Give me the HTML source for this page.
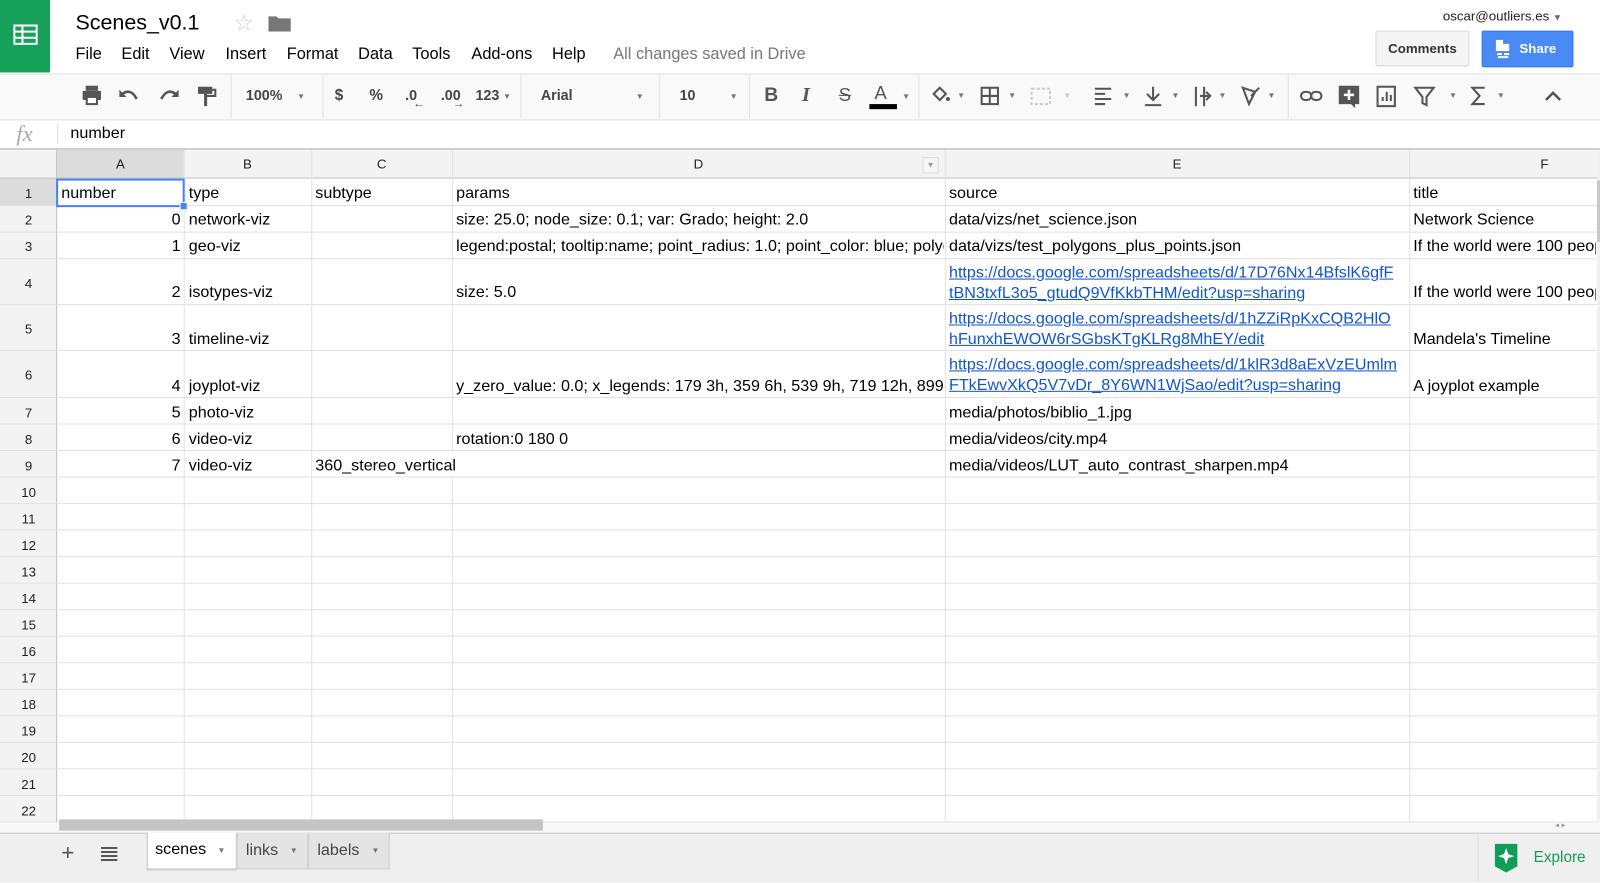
<!DOCTYPE html>
<html><head><meta charset="utf-8"><style>
html,body{margin:0;padding:0;width:1600px;height:882px;overflow:hidden;background:#fff}
#w{position:absolute;left:0;top:0;width:1568px;height:864px;transform:scale(1.020408);transform-origin:0 0;font-family:"Liberation Sans",Arial,sans-serif;color:#000}
.a{position:absolute}
.menu span{position:absolute;top:45px;font-size:16px}
.tb{position:absolute;top:85px;font-size:14px;color:#444;font-weight:bold}
.sep{position:absolute;top:74px;width:1px;height:42px;background:#e2e2e2}
.vl{position:absolute;top:147px;width:1px;height:659px;background:#e2e2e2}
.hl{position:absolute;left:0;width:1565px;height:1px;background:#e2e2e2}
.ch{position:absolute;top:153px;font-size:13px;color:#222;text-align:center}
.rh{position:absolute;left:0;width:56px;text-align:center;font-size:13px;color:#222}
.c{position:absolute;font-size:15.8px;white-space:nowrap;overflow:hidden;line-height:20px}
.r{text-align:right}
a{color:#1155cc;text-decoration:underline}
.dd{position:absolute;font-size:8px;color:#777}
</style></head><body><div id="w">
<div class="a" style="left:0;top:0;width:49px;height:71px;background:#16a05a"></div>
<svg class="a" style="left:13px;top:24px" width="24" height="20" viewBox="0 0 24 20"><rect x="1" y="1" width="22" height="18" fill="none" stroke="#fff" stroke-width="2"/><path d="M1 7h22M1 13h22M9 1v18" stroke="#fff" stroke-width="2"/></svg>
<div class="a" style="left:74px;top:11px;font-size:21px">Scenes_v0.1</div>
<div class="a" style="left:229px;top:10px;font-size:22px;color:#ccc">☆</div>
<svg class="a" style="left:263px;top:14px" width="22" height="17"><path d="M0 2h8l2 2h12v13H0z" fill="#777"/></svg>
<div class="menu"><span style="left:74px">File</span><span style="left:119px">Edit</span><span style="left:166px">View</span><span style="left:221px">Insert</span><span style="left:281px">Format</span><span style="left:351px">Data</span><span style="left:404px">Tools</span><span style="left:462px">Add-ons</span><span style="left:541px">Help</span><span style="left:601px;color:#777">All changes saved in Drive</span></div>
<div class="a" style="left:1414px;top:8px;font-size:13px;color:#222">oscar@outliers.es <span style="font-size:9px;color:#666">▼</span></div>
<div class="a" style="left:1348px;top:30px;width:90px;height:33px;background:#f5f5f5;border:1px solid #d9d9d9;border-radius:2px;font-size:13px;font-weight:bold;line-height:33px;text-align:center;color:#333">Comments</div>
<div class="a" style="left:1452px;top:30px;width:88px;height:34px;background:#4a8af4;border:1px solid #3079ed;border-radius:2px;font-size:13px;font-weight:bold;line-height:34px;color:#fff"><span style="position:absolute;left:12px;top:7px;width:14px;height:18px;border:0"><svg width="16" height="20"><rect x="1" y="0" width="7" height="11" fill="#fff"/><rect x="8" y="4" width="6" height="7" fill="#fff"/><path d="M2 14h5M9 14h5M3 17h10" stroke="#fff" stroke-width="2"/></svg></span><span style="position:absolute;left:36px">Share</span></div>
<div class="a" style="left:0;top:72px;width:1568px;height:1px;background:#e0e0e0"></div>
<div class="a" style="left:0;top:73px;width:1568px;height:44px;background:#f9f9f9"></div>
<div class="a" style="left:0;top:117px;width:1568px;height:1px;background:#e0e0e0"></div>
<svg class="a" style="left:78px;top:82px" width="150" height="24" fill="#555"><rect x="3" y="7" width="18" height="9" rx="1"/><rect x="6" y="2" width="12" height="5"/><rect x="7" y="13" width="10" height="7" fill="#fff" stroke="#555" stroke-width="2"/><path d="M42 10q8-6 14 5" stroke="#555" stroke-width="2.5" fill="none"/><path d="M39 6v7h7z"/><path d="M94 10q-8-6-14 5" stroke="#555" stroke-width="2.5" fill="none"/><path d="M97 6v7h-7z"/><rect x="116" y="3" width="14" height="7"/><rect x="122" y="10" width="3" height="12"/><path d="M130 6h3v6h-9" stroke="#555" stroke-width="2" fill="none"/></svg>
<div class="sep" style="left:226px"></div>
<div class="tb" style="left:241px">100%</div><div class="dd" style="left:291px;top:90px">▼</div>
<div class="sep" style="left:316px"></div>
<div class="tb" style="left:328px;font-size:15px">$</div><div class="tb" style="left:362px;font-size:15px">%</div>
<div class="tb" style="left:397px">.0</div><div class="a" style="left:405px;top:96px;font-size:11px;color:#444">←</div>
<div class="tb" style="left:432px">.00</div><div class="a" style="left:444px;top:96px;font-size:11px;color:#444">→</div>
<div class="tb" style="left:466px">123</div><div class="dd" style="left:493px;top:90px">▼</div>
<div class="sep" style="left:510px"></div>
<div class="tb" style="left:530px">Arial</div><div class="dd" style="left:623px;top:90px">▼</div>
<div class="sep" style="left:646px"></div>
<div class="tb" style="left:666px">10</div><div class="dd" style="left:715px;top:90px">▼</div>
<div class="sep" style="left:734px"></div>
<div class="tb" style="left:749px;font-size:19px;top:83px;color:#555">B</div>
<div class="tb" style="left:786px;font-size:20px;top:82px;color:#555;font-family:'Liberation Serif',serif;font-style:italic">I</div>
<div class="tb" style="left:822px;font-size:18px;top:83px;color:#555;text-decoration:line-through;font-weight:normal">S</div>
<div class="tb" style="left:857px;font-size:18px;top:81px;color:#555;font-weight:normal">A</div><div class="a" style="left:852px;top:102px;width:27px;height:5px;background:#000"></div><div class="dd" style="left:884px;top:90px">▼</div>
<div class="sep" style="left:900px"></div>
<svg class="a" style="left:910px;top:82px" width="360" height="24" fill="#555" stroke="#555"><path d="M5 10l6-6 6 6-6 6z" stroke-width="2" fill="none"/><circle cx="19" cy="15" r="2" stroke="none"/><text x="28" y="14" font-size="8" stroke="none" fill="#777">▼</text><rect x="52" y="4" width="16" height="16" fill="none" stroke-width="2"/><path d="M60 4v16M52 12h16" stroke-width="2"/><text x="78" y="14" font-size="8" stroke="none" fill="#777">▼</text><rect x="101" y="5" width="18" height="15" fill="none" stroke="#ccc" stroke-width="2" stroke-dasharray="3 2"/><text x="132" y="14" font-size="8" stroke="none" fill="#ccc">▼</text><path d="M163 5h16M163 10h10M163 15h16M163 20h10" stroke-width="2"/><text x="190" y="14" font-size="8" stroke="none" fill="#777">▼</text><path d="M220 3v12M214 10l6 6 6-6M212 21h16" stroke-width="2" fill="none"/><text x="238" y="14" font-size="8" stroke="none" fill="#777">▼</text><path d="M262 3v19M270 3v19M266 12h10M272 8l4 4-4 4" stroke-width="2" fill="none"/><text x="284" y="14" font-size="8" stroke="none" fill="#777">▼</text><path d="M308 4l12 4-6 12zM316 12l8-8" stroke-width="2" fill="none"/><text x="332" y="14" font-size="8" stroke="none" fill="#777">▼</text></svg>
<div class="sep" style="left:1262px"></div>
<svg class="a" style="left:1272px;top:82px" width="270" height="26" fill="#555" stroke="#555"><rect x="3" y="8" width="10" height="8" rx="4" fill="none" stroke-width="2"/><rect x="13" y="8" width="10" height="8" rx="4" fill="none" stroke-width="2"/><path d="M40 2h20v18h-4v4l-4-4H40z" stroke="none"/><path d="M50 6v10M45 11h10" stroke="#fff" stroke-width="2.5"/><rect x="78" y="3" width="17" height="19" fill="none" stroke-width="2"/><path d="M83 17v-4M87 17V8M91 17v-6" stroke-width="2"/><path d="M115 4h18l-7 9v8l-4-2v-6z" stroke-width="2" fill="none"/><text x="148" y="14" font-size="8" stroke="none" fill="#777">▼</text><path d="M183 4h-12l7 8-7 8h12" stroke-width="2" fill="none"/><text x="195" y="14" font-size="8" stroke="none" fill="#777">▼</text><path d="M243 16l7-7 7 7" stroke-width="2.5" fill="none"/></svg>
<div class="a" style="left:16px;top:118px;font-size:22px;color:#aaa;font-family:'Liberation Serif',serif;font-style:italic">fx</div>
<div class="a" style="left:56px;top:121px;width:1px;height:20px;background:#ddd"></div>
<div class="a" style="left:69px;top:122px;font-size:15.8px">number</div>
<div class="a" style="left:0;top:145px;width:1568px;height:2px;background:#d0d0d0"></div>
<div class="a" style="left:0;top:147px;width:1565px;height:28px;background:#f3f3f3"></div>
<div class="a" style="left:56px;top:147px;width:124px;height:28px;background:#dcdcdc"></div>
<div class="a" style="left:0;top:175px;width:56px;height:631px;background:#f3f3f3"></div>
<div class="a" style="left:0;top:175px;width:56px;height:27px;background:#dcdcdc"></div>
<div class="a" style="left:0;top:174px;width:1565px;height:1px;background:#c0c0c0"></div>
<div class="a" style="left:55px;top:147px;width:1px;height:659px;background:#c0c0c0"></div>
<div class="vl" style="left:180px"></div><div class="vl" style="left:305px"></div><div class="vl" style="left:443px"></div><div class="vl" style="left:926px"></div><div class="vl" style="left:1381px"></div>
<div class="a" style="left:1565px;top:147px;width:3px;height:659px;background:#f0f0f0"></div>
<div class="a" style="left:1565px;top:177px;width:3px;height:60px;background:#c8c8c8"></div>
<div class="ch" style="left:56px;width:124px">A</div><div class="ch" style="left:180px;width:125px">B</div><div class="ch" style="left:305px;width:138px">C</div><div class="ch" style="left:443px;width:483px">D</div><div class="ch" style="left:926px;width:455px">E</div><div class="ch" style="left:1381px;width:265px">F</div>
<div class="a" style="left:904px;top:154px;width:14px;height:14px;border:1px solid #ddd;background:#f6f6f6;font-size:8px;color:#999;text-align:center;line-height:14px">▼</div>
<div class="hl" style="top:201px"></div><div class="hl" style="top:227px"></div><div class="hl" style="top:253px"></div><div class="hl" style="top:298px"></div><div class="hl" style="top:343px"></div><div class="hl" style="top:389px"></div><div class="hl" style="top:415px"></div><div class="hl" style="top:441px"></div><div class="hl" style="top:467px"></div><div class="hl" style="top:493px"></div><div class="hl" style="top:519px"></div><div class="hl" style="top:545px"></div><div class="hl" style="top:571px"></div><div class="hl" style="top:597px"></div><div class="hl" style="top:623px"></div><div class="hl" style="top:649px"></div><div class="hl" style="top:675px"></div><div class="hl" style="top:701px"></div><div class="hl" style="top:727px"></div><div class="hl" style="top:753px"></div><div class="hl" style="top:779px"></div><div class="hl" style="top:805px"></div>
<div class="rh" style="top:182px">1</div><div class="rh" style="top:208px">2</div><div class="rh" style="top:234px">3</div><div class="rh" style="top:270px">4</div><div class="rh" style="top:315px">5</div><div class="rh" style="top:360px">6</div><div class="rh" style="top:397px">7</div><div class="rh" style="top:423px">8</div><div class="rh" style="top:449px">9</div><div class="rh" style="top:475px">10</div><div class="rh" style="top:501px">11</div><div class="rh" style="top:527px">12</div><div class="rh" style="top:553px">13</div><div class="rh" style="top:579px">14</div><div class="rh" style="top:605px">15</div><div class="rh" style="top:631px">16</div><div class="rh" style="top:657px">17</div><div class="rh" style="top:683px">18</div><div class="rh" style="top:709px">19</div><div class="rh" style="top:735px">20</div><div class="rh" style="top:761px">21</div><div class="rh" style="top:787px">22</div>
<div class="a" style="left:55px;top:175px;width:122px;height:24px;border:2px solid #4285f4"></div>
<div class="a" style="left:176px;top:198px;width:6px;height:6px;background:#4285f4;border:1px solid #fff"></div>
<div class="c" style="left:60px;top:180px">number</div><div class="c" style="left:185px;top:180px">type</div><div class="c" style="left:309px;top:180px">subtype</div><div class="c" style="left:447px;top:180px">params</div><div class="c" style="left:930px;top:180px">source</div><div class="c" style="left:1385px;top:180px">title</div>
<div class="c r" style="left:60px;width:117px;top:206px">0</div><div class="c" style="left:185px;top:206px">network-viz</div><div class="c" style="left:447px;top:206px">size: 25.0; node_size: 0.1; var: Grado; height: 2.0</div><div class="c" style="left:930px;top:206px">data/vizs/net_science.json</div><div class="c" style="left:1385px;top:206px">Network Science</div>
<div class="c r" style="left:60px;width:117px;top:232px">1</div><div class="c" style="left:185px;top:232px">geo-viz</div><div class="c" style="left:447px;top:232px;width:478px">legend:postal; tooltip:name; point_radius: 1.0; point_color: blue; polygon</div><div class="c" style="left:930px;top:232px">data/vizs/test_polygons_plus_points.json</div><div class="c" style="left:1385px;top:232px;width:179px">If the world were 100 people</div>
<div class="c r" style="left:60px;width:117px;top:277px">2</div><div class="c" style="left:185px;top:277px">isotypes-viz</div><div class="c" style="left:447px;top:277px">size: 5.0</div><div class="c" style="left:930px;top:258px;width:450px"><a>https://docs.google.com/spreadsheets/d/17D76Nx14BfslK6gfF<br>tBN3txfL3o5_gtudQ9VfKkbTHM/edit?usp=sharing</a></div><div class="c" style="left:1385px;top:277px;width:179px">If the world were 100 people</div>
<div class="c r" style="left:60px;width:117px;top:323px">3</div><div class="c" style="left:185px;top:323px">timeline-viz</div><div class="c" style="left:930px;top:303px;width:450px"><a>https://docs.google.com/spreadsheets/d/1hZZiRpKxCQB2HlO<br>hFunxhEWOW6rSGbsKTgKLRg8MhEY/edit</a></div><div class="c" style="left:1385px;top:323px">Mandela's Timeline</div>
<div class="c r" style="left:60px;width:117px;top:369px">4</div><div class="c" style="left:185px;top:369px">joyplot-viz</div><div class="c" style="left:447px;top:369px;width:478px">y_zero_value: 0.0; x_legends: 179 3h, 359 6h, 539 9h, 719 12h, 899 15h</div><div class="c" style="left:930px;top:348px;width:450px"><a>https://docs.google.com/spreadsheets/d/1klR3d8aExVzEUmlm<br>FTkEwvXkQ5V7vDr_8Y6WN1WjSao/edit?usp=sharing</a></div><div class="c" style="left:1385px;top:369px">A joyplot example</div>
<div class="c r" style="left:60px;width:117px;top:395px">5</div><div class="c" style="left:185px;top:395px">photo-viz</div><div class="c" style="left:930px;top:395px">media/photos/biblio_1.jpg</div>
<div class="c r" style="left:60px;width:117px;top:421px">6</div><div class="c" style="left:185px;top:421px">video-viz</div><div class="c" style="left:447px;top:421px">rotation:0 180 0</div><div class="c" style="left:930px;top:421px">media/videos/city.mp4</div>
<div class="c r" style="left:60px;width:117px;top:447px">7</div><div class="c" style="left:185px;top:447px">video-viz</div><div class="a" style="left:306px;top:442px;width:619px;height:25px;background:#fff"></div><div class="c" style="left:309px;top:447px">360_stereo_vertical</div><div class="c" style="left:930px;top:447px">media/videos/LUT_auto_contrast_sharpen.mp4</div>
<div class="a" style="left:0;top:806px;width:1568px;height:10px;background:#f8f8f8"></div>
<div class="a" style="left:58px;top:803px;width:474px;height:11px;background:#c4c4c4"></div>
<div class="a" style="left:1524px;top:804px;width:40px;height:10px;font-size:8px;color:#999">◂ ▸</div>
<div class="a" style="left:0;top:816px;width:1568px;height:48px;background:#efefef;border-top:1px solid #c8c8c8"></div>
<div class="a" style="left:60px;top:823px;font-size:22px;color:#555">+</div>
<div class="a" style="left:99px;top:830px;width:16px;height:14px;background:repeating-linear-gradient(#555 0 2px,transparent 2px 4px)"></div>
<div class="a" style="left:144px;top:816px;width:86px;height:35px;background:#fff;border:1px solid #ccc;border-top:none;box-shadow:0 1px 1px #bbb"></div>
<div class="a" style="left:152px;top:824px;font-size:15.8px">scenes</div><div class="dd" style="left:213px;top:829px">▼</div>
<div class="a" style="left:232px;top:816px;width:68px;height:35px;background:#e4e4e4;border:1px solid #d0d0d0;border-top:none"></div>
<div class="a" style="left:241px;top:825px;font-size:15.8px;color:#444">links</div><div class="dd" style="left:284px;top:829px">▼</div>
<div class="a" style="left:302px;top:816px;width:78px;height:35px;background:#e4e4e4;border:1px solid #d0d0d0;border-top:none"></div>
<div class="a" style="left:311px;top:825px;font-size:15.8px;color:#444">labels</div><div class="dd" style="left:364px;top:829px">▼</div>
<div class="a" style="left:1448px;top:817px;width:1px;height:47px;background:#ddd"></div>
<svg class="a" style="left:1464px;top:826px" width="24" height="30"><path d="M1 1h22v22l-11 6-11-6z" fill="#0f9d58"/><path d="M12 5l2 6 6 2-6 2-2 6-2-6-6-2 6-2z" fill="#fff"/></svg>
<div class="a" style="left:1503px;top:832px;font-size:15px;color:#0f9d58">Explore</div>
</div></body></html>
